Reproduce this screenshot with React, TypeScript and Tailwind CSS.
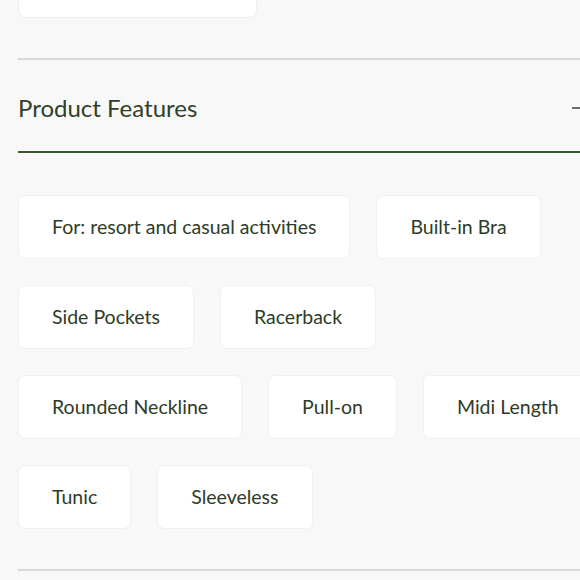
const features = [
  'For: resort and casual activities',
  'Built-in Bra',
  'Side Pockets',
  'Racerback',
  'Rounded Neckline',
  'Pull-on',
  'Midi Length',
  'Tunic',
  'Sleeveless',
];

function FeatureChip({ label }: { label: string }) {
  return (
    <div className="flex h-[64px] items-center rounded-[7px] border border-[#f0f0f0] bg-white px-[33px] text-[19.5px] text-[#2e3b27] whitespace-nowrap">
      {label}
    </div>
  );
}

export default function App() {
  return (
    <div
      className="h-[580px] w-[580px] overflow-hidden bg-[#f8f8f8]"
      style={{ fontFamily: 'Lato, "Open Sans", sans-serif' }}
    >
      <div className="w-[595px] pl-[18px]">
        <div className="h-[18px] w-[239px] rounded-b-[8px] border border-t-0 border-[#eeeeee] bg-white" />
        <div className="mt-[40px] h-[2px] bg-[#d9d9d9]" />
        <div className="flex h-[91px] items-center justify-between pt-[4px]">
          <h2 className="text-[24px] text-[#2f3f28]">Product Features</h2>
          <div className="mr-[5px] h-[2px] w-[18px] bg-[#6b6b6b]" />
        </div>
        <div className="h-[2px] bg-[#3f5433]" />
        <div className="flex flex-wrap gap-x-[26px] gap-y-[26px] pt-[42px]">
          {features.map((f) => (
            <FeatureChip key={f} label={f} />
          ))}
        </div>
        <div className="mt-[40px] h-[2px] bg-[#d9d9d9]" />
      </div>
    </div>
  );
}
